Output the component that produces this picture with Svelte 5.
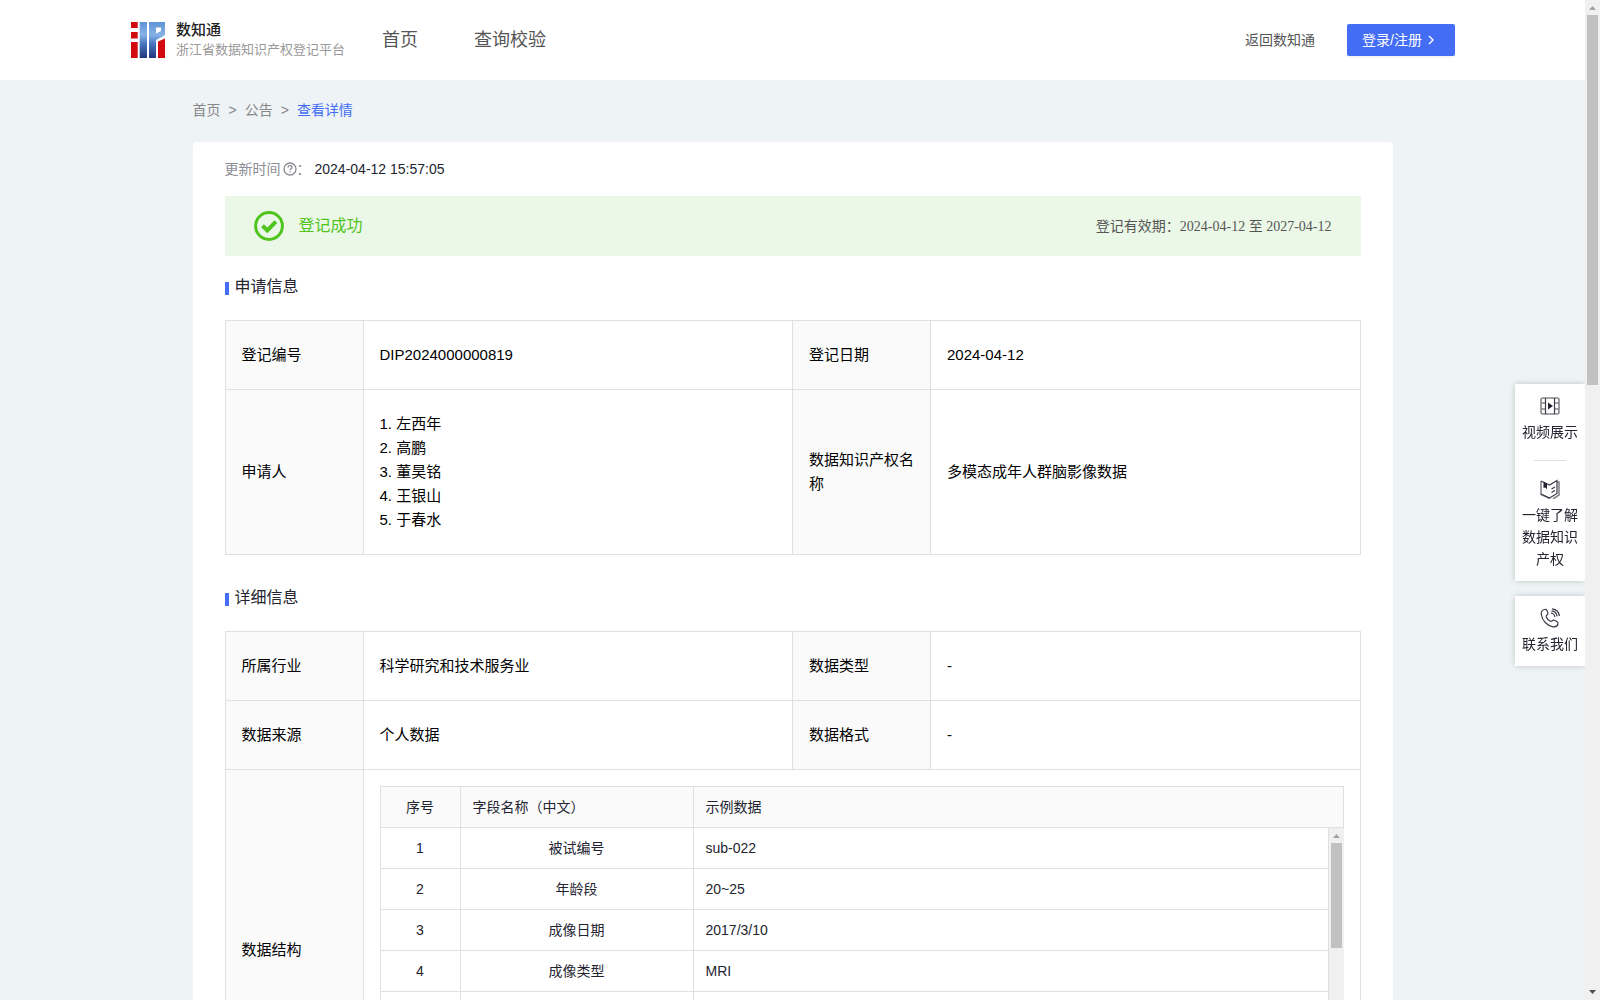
<script>
  const navLinks = ['首页', '查询校验'];

  const applicants = ['左西年', '高鹏', '董昊铭', '王银山', '于春水'];

  const fields = [
    { name: '被试编号', sample: 'sub-022' },
    { name: '年龄段', sample: '20~25' },
    { name: '成像日期', sample: '2017/3/10' },
    { name: '成像类型', sample: 'MRI' }
  ];
</script>

<div class="shell">
  <div class="page">
    <header class="topbar">
      <a class="brand" href="#home">
        <svg class="logo" viewBox="0 0 34 36" aria-hidden="true">
          <defs>
            <linearGradient id="logoBlue" x1="0" y1="0" x2="0" y2="36" gradientUnits="userSpaceOnUse">
              <stop offset="0" stop-color="#5f93d6" />
              <stop offset=".35" stop-color="#86b2e6" />
              <stop offset=".6" stop-color="#4a78c0" />
              <stop offset="1" stop-color="#23357c" />
            </linearGradient>
          </defs>
          <path fill="#d20a0f" d="M0 0h6.700v6H0zM0 10h6.700v6.500H0zM0 20h6.700v16H0zM27 19.500l7-3V36h-7z" />
          <path
            fill="url(#logoBlue)"
            fill-rule="evenodd"
            d="M8.700 0h7.300v36H8.700zM18 0h16v13l-9 5v18h-7zM25 5.500v6l5-2.500V5.500z"
          />
        </svg>
        <span class="brandText">
          <strong>数知通</strong>
          <small>浙江省数据知识产权登记平台</small>
        </span>
      </a>
      <nav class="nav">
        {#each navLinks as link}
          <a href="#nav">{link}</a>
        {/each}
      </nav>
      <a class="back" href="#portal">返回数知通</a>
      <button class="login" type="button">
        登录/注册
        <svg viewBox="0 0 12 12" aria-hidden="true"><path d="M4 2l4 4-4 4" /></svg>
      </button>
    </header>

    <main>
      <div class="crumbs">
        <a href="#home">首页</a><span>&gt;</span><a href="#notice">公告</a><span>&gt;</span><a class="current" href="#detail">查看详情</a>
      </div>

      <section class="card">
        <div class="updated">
          <span>更新时间</span>
          <svg viewBox="0 0 14 14" aria-hidden="true">
            <circle cx="7" cy="7" r="6" />
            <path d="M5 5.6C5 4.4 5.9 3.7 7 3.7s2 .7 2 1.8c0 1.2-2 1.4-2 2.7" />
            <path d="M7 9.4v1.2" />
          </svg>
          <span class="colon">：</span>
          <time>2024-04-12 15:57:05</time>
        </div>

        <div class="status">
          <svg viewBox="0 0 30 30" aria-hidden="true">
            <circle cx="15" cy="15" r="13.4" />
            <path class="tick" d="M8.500 14.800l4.800 4.600 8.600-8.800" />
          </svg>
          <span class="state">登记成功</span>
          <span class="valid">登记有效期：<span class="dates">2024-04-12 至 2027-04-12</span></span>
        </div>

        <h2>申请信息</h2>
        <table class="info">
          <colgroup><col class="label" /><col /><col class="label" /><col /></colgroup>
          <tbody>
            <tr>
              <th scope="row">登记编号</th>
              <td>DIP2024000000819</td>
              <th scope="row">登记日期</th>
              <td>2024-04-12</td>
            </tr>
            <tr>
              <th scope="row">申请人</th>
              <td>
                {#each applicants as person, i}
                  <div>{i + 1}. {person}</div>
                {/each}
              </td>
              <th scope="row">数据知识产权名称</th>
              <td>多模态成年人群脑影像数据</td>
            </tr>
          </tbody>
        </table>

        <h2 class="next">详细信息</h2>
        <table class="info">
          <colgroup><col class="label" /><col /><col class="label" /><col /></colgroup>
          <tbody>
            <tr>
              <th scope="row">所属行业</th>
              <td>科学研究和技术服务业</td>
              <th scope="row">数据类型</th>
              <td>-</td>
            </tr>
            <tr>
              <th scope="row">数据来源</th>
              <td>个人数据</td>
              <th scope="row">数据格式</th>
              <td>-</td>
            </tr>
            <tr>
              <th scope="row">数据结构</th>
              <td class="nested" colspan="3">
                <div class="fields">
                  <table>
                    <colgroup><col class="no" /><col class="name" /><col /></colgroup>
                    <thead>
                      <tr>
                        <th class="center" scope="col">序号</th>
                        <th scope="col">字段名称（中文）</th>
                        <th scope="col">示例数据</th>
                      </tr>
                    </thead>
                  </table>
                  <div class="rows">
                    <div class="rowsView">
                      <table>
                        <colgroup><col class="no" /><col class="name" /><col /></colgroup>
                        <tbody>
                          {#each fields as field, i}
                            <tr>
                              <td class="center">{i + 1}</td>
                              <td class="center">{field.name}</td>
                              <td>{field.sample}</td>
                            </tr>
                          {/each}
                          <tr class="blank"><td></td><td></td><td></td></tr>
                        </tbody>
                      </table>
                    </div>
                    <div class="bar">
                      <svg viewBox="0 0 15 15" aria-hidden="true"><path d="M4 10h7L7.500 6z" /></svg>
                      <div class="thumb"></div>
                    </div>
                  </div>
                </div>
              </td>
            </tr>
          </tbody>
        </table>
      </section>
    </main>
  </div>

  <div class="bar pageBar">
    <svg viewBox="0 0 15 15" aria-hidden="true"><path d="M4 10h7L7.500 6z" /></svg>
    <div class="thumb"></div>
    <svg class="down" viewBox="0 0 15 15" aria-hidden="true"><path d="M4 5h7L7.500 9z" /></svg>
  </div>

  <aside class="dock">
    <div class="panel">
      <a href="#video">
        <svg viewBox="0 0 20 20" aria-hidden="true">
          <rect class="frame" x="1" y="2" width="18" height="16" rx="2" />
          <path class="frame" d="M1 7h4M1 13h4M15 7h4M15 13h4" />
          <path d="M5.500 2v16M14.500 2v16" />
          <path class="solid" d="M8 6.500v7l5-3.500z" />
        </svg>
        视频展示
      </a>
      <hr />
      <a href="#guide">
        <svg viewBox="0 0 20 20" aria-hidden="true">
          <path class="frame" d="M1 2v13.500l9 4M17 3h2v13l-6 4" />
          <path d="M1 2l8.500 4L17 1.500v13L9.500 19 1 15M11.500 10l3.500-2M11.500 13.500l3.500-2" />
          <path class="solid" d="M3.500 3l3.500 1.500v6L5.500 8.500l-2 .5z" />
        </svg>
        一键了解数据知识产权
      </a>
    </div>
    <div class="panel">
      <a href="#contact">
        <svg viewBox="0 0 20 20" aria-hidden="true">
          <path d="M4.500 1.500C2.500 2 1 4 1.300 6.500c.8 6 5.700 11.300 11.700 12.300 2.500.3 4.500-1 5-2.800.3-1-.1-1.700-.9-2.200l-2.600-1.500c-1.700-1-2.500 1.500-4 1-2-.8-3.700-2.800-4.300-4.600-.4-1.600 2.200-1.900 1.600-3.900L6.900 2.400C6.400 1.500 5.500 1.200 4.500 1.500z" />
          <path d="M11 5c2 .3 3.600 2 3.800 4M11.500 2.800c3 .3 5.300 2.700 5.600 5.600M12 .8c4 .4 7 3.300 7.400 7.200" />
        </svg>
        联系我们
      </a>
    </div>
  </aside>
</div>

<style>
  :global(body) {
    background: #eef3f6;
    color: #23242f;
    font-family: "Liberation Sans", "Noto Sans CJK SC", sans-serif;
    font-size: 14px;
    line-height: 22px;
  }

  a { color: inherit; text-decoration: none; }

  .shell { display: flex; height: 100vh; overflow: hidden; }
  .page { flex: 1; min-width: 0; overflow-y: auto; scrollbar-width: none; }

  /* header */
  .topbar {
    display: flex;
    align-items: center;
    height: 80px;
    box-sizing: border-box;
    padding: 0 130px;
    background: #fff;
  }
  .brand { display: flex; align-items: center; gap: 10px; }
  .logo { width: 36px; height: 36px; }
  .brandText { display: flex; flex-direction: column; }
  .brandText strong { font-size: 15px; font-weight: 500; line-height: 20px; color: #222; }
  .brandText small { font-size: 13px; line-height: 20px; color: #999; }
  .nav { display: flex; gap: 56px; margin-left: 37px; font-size: 18px; color: #555; }
  .back { margin-left: auto; color: #555; }
  .login {
    display: flex;
    align-items: center;
    gap: 3px;
    width: 108px;
    height: 32px;
    margin-left: 32px;
    padding: 0 15px;
    border: 0;
    border-radius: 2px;
    background: #446df6;
    box-shadow: 0 2px 0 rgba(0, 0, 0, 0.04);
    color: #fff;
    font: inherit;
    white-space: nowrap;
  }
  .login svg { flex: none; width: 12px; height: 12px; fill: none; stroke: #fff; stroke-width: 1.4; }

  main { max-width: 1200px; margin: 0 auto; }

  .crumbs { display: flex; gap: 8px; padding: 19px 0 21px; color: #888; }
  .crumbs .current { color: #446df6; }

  .card { padding: 16px 32px 32px; border-radius: 4px; background: #fff; }

  .updated { display: flex; align-items: center; color: #8c8c93; }
  .updated svg { width: 14px; height: 14px; margin-left: 2px; fill: none; stroke: currentColor; stroke-width: 1.3; }
  .updated time { margin-left: 4px; color: #23242f; }

  .status {
    display: flex;
    align-items: center;
    height: 60px;
    margin-top: 16px;
    padding: 0 29px;
    background: #ebf8e7;
  }
  .status svg { width: 30px; height: 30px; fill: none; stroke: #4fc41c; stroke-width: 3; }
  .status .tick { stroke-width: 4; }
  .state { margin-left: 15px; font-size: 16px; color: #4fc41c; }
  .valid { margin-left: auto; color: #555; }
  .dates { font-family: "Liberation Serif", "Noto Sans CJK SC", serif; }

  h2 {
    display: flex;
    align-items: center;
    gap: 6px;
    margin: 19px 0 21px;
    font-size: 16px;
    font-weight: 400;
    line-height: 24px;
  }
  h2::before { content: ""; width: 4px; height: 13px; margin-top: 3px; background: #446df6; }
  h2.next { margin-top: 31px; }

  /* info tables */
  table { width: 100%; table-layout: fixed; }
  th { font-weight: 400; text-align: left; }

  .info { border-collapse: collapse; font-size: 15px; line-height: 24px; color: #000; }
  .info .label { width: 138px; }
  .info > tbody > tr > th,
  .info > tbody > tr > td { padding: 22px 16px; border: 1px solid #e0e0e0; }
  .info > tbody > tr > th { padding-right: 14px; background: #fafafa; }
  .info > tbody > tr > .nested { padding: 16px; }

  .fields { font-size: 14px; line-height: 22px; color: #23242f; border-top: 1px solid #e0e0e0; }
  .fields table { border-collapse: separate; border-spacing: 0; border-left: 1px solid #e0e0e0; }
  .fields .no { width: 80px; }
  .fields .name { width: 233px; }
  .fields th,
  .fields td { padding: 9px 12px; border-right: 1px solid #e0e0e0; border-bottom: 1px solid #e0e0e0; }
  .fields th { background: #fafafa; }
  .fields .center { text-align: center; }
  .fields .blank td { height: 22px; }

  .rows { display: flex; height: 286px; }
  .rowsView { flex: 1; min-width: 0; overflow: hidden; }

  /* scrollbars */
  .bar { display: flex; flex-direction: column; flex: none; width: 15px; background: #f0f0f0; }
  .bar svg { display: block; width: 15px; height: 15px; fill: #a3a3a3; }
  .bar .down { margin-top: auto; fill: #505050; }
  .thumb { width: 11px; height: 105px; margin: 0 2px; background: #c1c1c1; }
  .pageBar .thumb { height: 37%; }

  /* floating shortcuts */
  .dock { position: fixed; top: 384px; right: 15px; width: 70px; }
  .panel {
    margin-bottom: 15px;
    padding: 12px 6px 11px;
    background: #fff;
    box-shadow: 0 0 6px rgba(0, 0, 0, 0.2);
    clip-path: inset(-10px 0 -10px -10px);
  }
  .panel a { display: block; text-align: center; }
  .panel svg {
    display: block;
    width: 20px;
    height: 20px;
    margin: 0 auto 5px;
    fill: none;
    stroke: #3c3d48;
    stroke-width: 1.2;
  }
  .panel .frame { stroke: #85868c; stroke-width: 1.6; }
  .panel .solid { fill: #23242f; stroke: none; }
  .panel hr { width: 32px; margin: 17px auto 18px; border: 0; border-top: 1px solid #e0e0e0; }
</style>
